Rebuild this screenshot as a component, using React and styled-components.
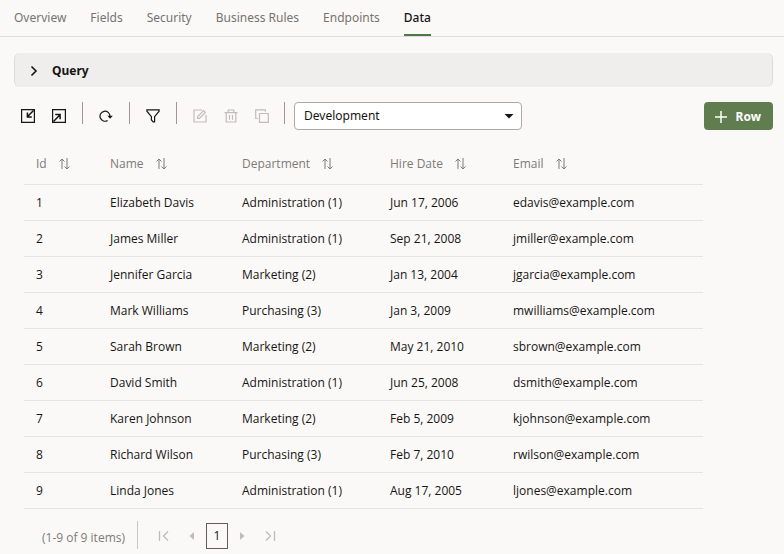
import React from "react";
import styled, { createGlobalStyle } from "styled-components";

const GlobalStyle = createGlobalStyle`
  *, *::before, *::after { box-sizing: border-box; }
  body {
    margin: 0;
    background: #fbf9f8;
    color: #161513;
    font: 12px/16px "Noto Sans", "Open Sans", sans-serif;
  }
  button, select { font: inherit; color: inherit; }
  button { cursor: pointer; }
  button:disabled { cursor: default; }
`;

const Page = styled.div`
  display: flex;
  flex-direction: column;
`;

const Tabs = styled.nav`
  display: flex;
  gap: 24px;
  height: 37px;
  padding: 0 14px;
  border-bottom: 1px solid #e0dedd;
`;

const Tab = styled.a`
  display: flex;
  align-items: center;
  padding-top: 2px;
  white-space: nowrap;
  text-decoration: none;
  color: ${(p) => (p.$active ? "#161513" : "#76736f")};
  font-weight: ${(p) => (p.$active ? 500 : 400)};
  border-bottom: 2px solid ${(p) => (p.$active ? "#507647" : "transparent")};
`;

const Main = styled.main`
  padding: 16px 11px 0 14px;
`;

const QueryPanel = styled.button`
  display: flex;
  align-items: center;
  gap: 12px;
  width: 100%;
  height: 34px;
  padding: 2px 12px 0;
  border: 1px solid #dddbd9;
  border-width: 0 1px;
  border-radius: 6px;
  background: #f0eeec;
  font-weight: 700;
`;

const Toolbar = styled.div`
  display: flex;
  align-items: flex-start;
  padding: 15px 0 0 2px;
`;

const Divider = styled.span`
  width: 1px;
  height: 22px;
  margin: ${(p) => (p.$tight ? "0 9px 0 10px" : "0 11px")};
  background: #9e9892;
`;

const Group = styled.div`
  display: flex;
  gap: 7px;
  padding-top: 2px;
`;

const IconButton = styled.button`
  display: flex;
  align-items: center;
  justify-content: center;
  width: 24px;
  height: 24px;
  padding: 0;
  border: 0;
  background: none;
  color: #161513;
  &:disabled { color: #bfbcb9; }
`;

const SelectBox = styled.div`
  display: grid;
  flex: 0 1 228px;
  align-items: center;
  > * { grid-area: 1 / 1; }
  > svg { justify-self: end; margin-right: 8px; pointer-events: none; }
`;

const Select = styled.select`
  appearance: none;
  width: 100%;
  height: 28px;
  padding: 0 28px 0 9px;
  border: 1px solid #aeaaa7;
  border-radius: 4px;
  background: #fff;
`;

const AddButton = styled.button`
  display: flex;
  align-items: center;
  gap: 9px;
  height: 28px;
  margin-left: auto;
  padding: 1px 12px 0 11px;
  border: 0;
  border-radius: 4px;
  background: #5f7d4f;
  color: #fff;
  font-weight: 700;
`;

const Content = styled.section`
  padding: 15px 70px 0 10px;
  font-family: "Open Sans", "Noto Sans", sans-serif;
`;

const Table = styled.table`
  width: 100%;
  table-layout: fixed;
  border-collapse: collapse;
`;

const Col = styled.col`
  width: ${(p) => p.$width};
`;

const Head = styled.th`
  height: 39px;
  padding: 0 12px;
  border-bottom: 1px solid #e6e4e2;
  color: #7d7a77;
  font-weight: 400;
  text-align: left;
`;

const SortButton = styled.button`
  display: flex;
  align-items: center;
  gap: 12px;
  padding: 0;
  border: 0;
  background: none;
  white-space: nowrap;
`;

const Cell = styled.td`
  height: 36px;
  padding: 1px 12px 0;
  border-bottom: 1px solid #e6e4e2;
  white-space: nowrap;
`;

const Pager = styled.footer`
  display: flex;
  align-items: center;
  padding: 12px 0 0 18px;
`;

const Count = styled.span`
  padding: 7px 12px 0 0;
  color: #7d7a77;
  white-space: nowrap;
`;

const PageNav = styled.nav`
  display: flex;
  align-items: center;
  gap: 4px;
  height: 28px;
  padding: 2px 0 0 14px;
  border-left: 1px solid #cac7c4;
`;

const PageSteps = styled.div`
  display: flex;
  align-items: center;
  gap: 2px;
`;

const CurrentPage = styled.button`
  width: 22px;
  height: 26px;
  padding: 0;
  border: 1px solid #605d5a;
  background: none;
`;

const icons = {
  import: (
    <>
      <path d="M.6.6h12.8v12.8H.6z" />
      <path d="M12.5 1.5 6.6 7.6M6.4 3.5v4.4h4.4" strokeWidth="1.5" />
    </>
  ),
  export: (
    <>
      <path d="M.6.6h12.8v12.8H.6z" />
      <path d="M1.5 12.5 7.8 6M3.2 5.6h4.9v4.6" strokeWidth="1.5" />
    </>
  ),
  refresh: (
    <>
      <path d="M8.6 11.5A5 5 0 1 1 11 7.2" />
      <path d="M8.4 6.8h5.4L11.1 9.8z" fill="currentColor" stroke="none" />
    </>
  ),
  filter: <path d="M.9.8h12.2v1.4L8.6 7.6v5.2H7.2L5.4 11V7.6L.9 2.2z" />,
  edit: (
    <>
      <path d="M9 1H1v12h12V6" />
      <path d="m4.6 7.6 6-6 1.8 1.8-6 6H4.6z" />
    </>
  ),
  remove: (
    <>
      <path d="M.5 3.6h13M4.2 3.6V1h5.6v2.6M2.2 3.6V13h9.6V3.6" />
      <path d="M5.5 6v4.8M8.5 6v4.8" />
    </>
  ),
  copy: <path d="M2.8 9.5H.7V.8h9.6v2M4.5 4.5h8.8v8.8H4.5z" />,
};

function ToolIcon({ name }) {
  return (
    <svg width="14" height="14" viewBox="0 0 14 14" fill="none" stroke="currentColor" strokeWidth="1.2" aria-hidden="true">
      {icons[name]}
    </svg>
  );
}

function Tool({ icon, label, disabled }) {
  return (
    <IconButton type="button" aria-label={label} disabled={disabled}>
      <ToolIcon name={icon} />
    </IconButton>
  );
}

function SortIcon() {
  return (
    <svg width="11" height="12" viewBox="0 0 11 12" fill="none" stroke="currentColor" aria-hidden="true">
      <path d="M3 11V1M.5 3.5 3 1l2.5 2.5M8 0v11M5.5 8.5 8 11l2.5-2.5" />
    </svg>
  );
}

const pagerPaths = {
  first: <path d="M1.5 1v10M10 1.5 5.5 6l4.5 4.5" />,
  previous: <path d="M8 2v8L3.5 6z" fill="currentColor" stroke="none" />,
  next: <path d="M4 2v8L8.5 6z" fill="currentColor" stroke="none" />,
  last: <path d="M10.5 1v10M2 1.5 6.5 6 2 10.5" />,
};

function PagerButton({ kind, label }) {
  return (
    <IconButton type="button" aria-label={label} disabled>
      <svg width="12" height="12" viewBox="0 0 12 12" fill="none" stroke="currentColor" strokeWidth="1.3" aria-hidden="true">
        {pagerPaths[kind]}
      </svg>
    </IconButton>
  );
}

const tabs = ["Overview", "Fields", "Security", "Business Rules", "Endpoints", "Data"];

const columns = [
  { label: "Id", width: "74px" },
  { label: "Name", width: "132px" },
  { label: "Department", width: "148px" },
  { label: "Hire Date", width: "123px" },
  { label: "Email", width: "auto" },
];

const rows = [
  ["1", "Elizabeth Davis", "Administration (1)", "Jun 17, 2006", "edavis@example.com"],
  ["2", "James Miller", "Administration (1)", "Sep 21, 2008", "jmiller@example.com"],
  ["3", "Jennifer Garcia", "Marketing (2)", "Jan 13, 2004", "jgarcia@example.com"],
  ["4", "Mark Williams", "Purchasing (3)", "Jan 3, 2009", "mwilliams@example.com"],
  ["5", "Sarah Brown", "Marketing (2)", "May 21, 2010", "sbrown@example.com"],
  ["6", "David Smith", "Administration (1)", "Jun 25, 2008", "dsmith@example.com"],
  ["7", "Karen Johnson", "Marketing (2)", "Feb 5, 2009", "kjohnson@example.com"],
  ["8", "Richard Wilson", "Purchasing (3)", "Feb 7, 2010", "rwilson@example.com"],
  ["9", "Linda Jones", "Administration (1)", "Aug 17, 2005", "ljones@example.com"],
];

export default function App() {
  return (
    <Page>
      <GlobalStyle />
      <Tabs aria-label="Business object">
        {tabs.map((tab) => (
          <Tab key={tab} href="#" $active={tab === "Data"} aria-current={tab === "Data" ? "page" : undefined}>
            {tab}
          </Tab>
        ))}
      </Tabs>
      <Main>
        <QueryPanel type="button" aria-expanded="false">
          <svg width="13" height="12" viewBox="0 0 13 12" fill="none" stroke="currentColor" strokeWidth="1.6" aria-hidden="true">
            <path d="M4.5 1.5 9 6l-4.5 4.5" />
          </svg>
          Query
        </QueryPanel>
        <Toolbar>
          <Group>
            <Tool icon="import" label="Import" />
            <Tool icon="export" label="Export" />
          </Group>
          <Divider />
          <Group><Tool icon="refresh" label="Reload" /></Group>
          <Divider />
          <Group><Tool icon="filter" label="Filter" /></Group>
          <Divider />
          <Group>
            <Tool icon="edit" label="Edit row" disabled />
            <Tool icon="remove" label="Delete row" disabled />
            <Tool icon="copy" label="Duplicate row" disabled />
          </Group>
          <Divider $tight />
          <SelectBox>
            <Select aria-label="Database" defaultValue="Development">
              <option>Development</option>
            </Select>
            <svg width="10" height="5" viewBox="0 0 10 5" aria-hidden="true">
              <path d="M0.5 0h9L5 4.5z" fill="currentColor" />
            </svg>
          </SelectBox>
          <AddButton type="button">
            <svg width="12" height="12" viewBox="0 0 12 12" fill="none" stroke="currentColor" strokeWidth="1.5" aria-hidden="true">
              <path d="M6 0v12M0 6h12" />
            </svg>
            Row
          </AddButton>
        </Toolbar>
        <Content>
          <Table>
            <colgroup>
              {columns.map((c) => <Col key={c.label} $width={c.width} />)}
            </colgroup>
            <thead>
              <tr>
                {columns.map((c) => (
                  <Head key={c.label} scope="col">
                    <SortButton type="button">{c.label}<SortIcon /></SortButton>
                  </Head>
                ))}
              </tr>
            </thead>
            <tbody>
              {rows.map((row) => (
                <tr key={row[0]}>
                  {row.map((value, i) => <Cell key={columns[i].label}>{value}</Cell>)}
                </tr>
              ))}
            </tbody>
          </Table>
          <Pager>
            <Count>(1-9 of 9 items)</Count>
            <PageNav aria-label="Pages">
              <PagerButton kind="first" label="First page" />
              <PageSteps>
                <PagerButton kind="previous" label="Previous page" />
                <CurrentPage type="button" aria-current="page">1</CurrentPage>
                <PagerButton kind="next" label="Next page" />
              </PageSteps>
              <PagerButton kind="last" label="Last page" />
            </PageNav>
          </Pager>
        </Content>
      </Main>
    </Page>
  );
}
